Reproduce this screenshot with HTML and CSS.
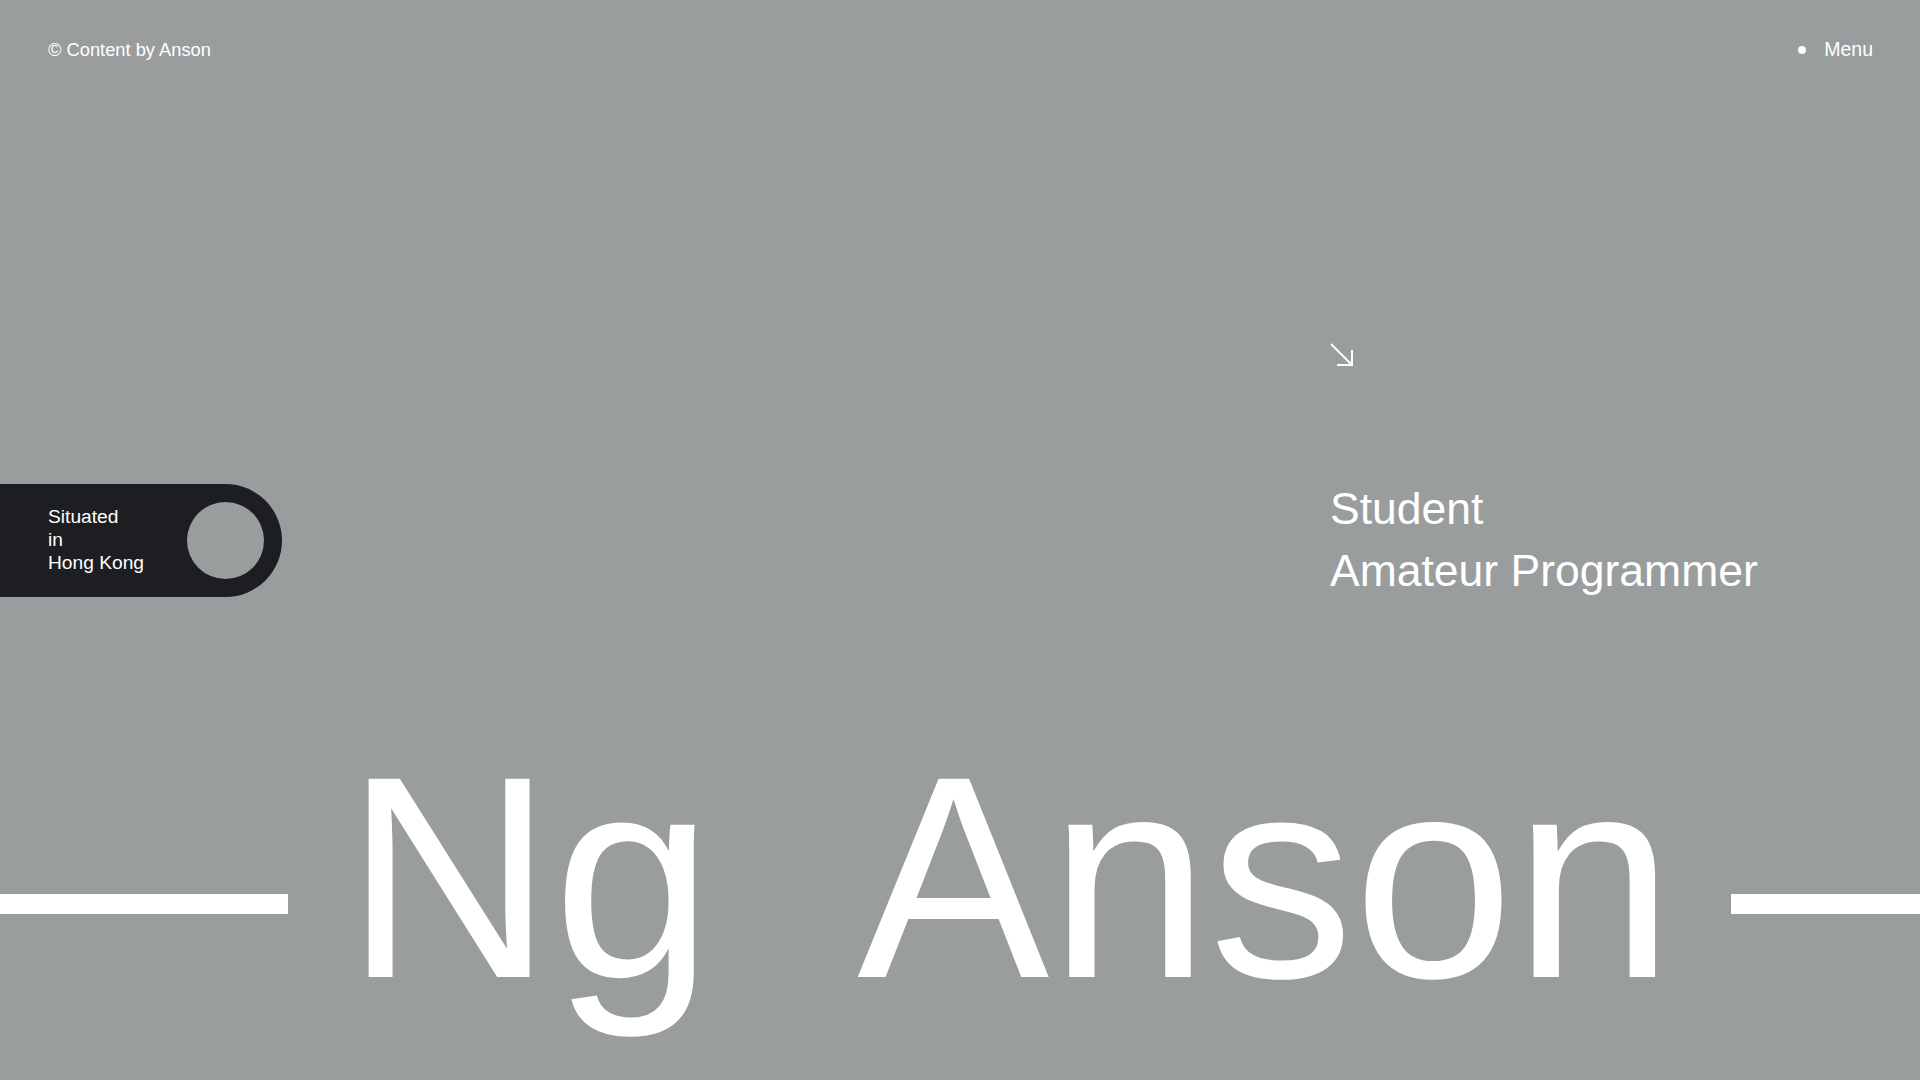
FILE: index.html
```html
<!DOCTYPE html>
<html lang="en">
<head>
<meta charset="utf-8">
<title>Ng Anson</title>
<link rel="stylesheet" href="styles.css">
</head>
<body>
<div class="page">
  <header class="header">
    <div class="credit">© Content by Anson</div>
    <nav class="menu"><span class="menu-dot"></span><span class="menu-label">Menu</span></nav>
  </header>

  <section class="hero">
    <div class="arrow">
      <svg width="24" height="24" viewBox="0 0 24 24" fill="none" stroke="#fff" stroke-width="2">
        <line x1="1" y1="1" x2="22" y2="22"/>
        <polyline points="7,22 22,22 22,7"/>
      </svg>
    </div>
    <div class="location">
      <div class="location-text">Situated<br>in<br>Hong Kong</div>
      <div class="location-hole"></div>
    </div>
    <div class="roles">
      <div>Student</div>
      <div>Amateur Programmer</div>
    </div>
  </section>

  <section class="name">
    <span class="name-line name-line-left"></span>
    <span class="name-word name-first">Ng</span>
    <span class="name-word">Anson</span>
    <span class="name-line name-line-right"></span>
  </section>
</div>
</body>
</html>
```

FILE: styles.css
```css
html, body {
  margin: 0;
  padding: 0;
}

body {
  background: #9a9d9e;
  color: #ffffff;
  font-family: "Liberation Sans", Arial, sans-serif;
  overflow: hidden;
}

.page {
  width: 1920px;
  height: 1080px;
  display: flex;
  flex-direction: column;
}

.header {
  display: flex;
  justify-content: space-between;
  align-items: center;
  padding: 38px 47px 0 48px;
  height: 23px;
}

.credit {
  font-size: 18.3px;
  line-height: 23px;
}

.menu {
  display: flex;
  align-items: center;
  gap: 18px;
}

.menu-dot {
  width: 8px;
  height: 8px;
  border-radius: 50%;
  background: #ffffff;
}

.menu-label {
  font-size: 19.5px;
  line-height: 23px;
}

.hero {
  display: grid;
  grid-template-columns: 1330px 1fr;
  grid-template-rows: 24px 124px;
  row-gap: 111px;
  margin-top: 282px;
  align-items: center;
}

.arrow {
  grid-column: 2;
  grid-row: 1;
  height: 24px;
}

.arrow svg {
  display: block;
}

.location {
  grid-column: 1;
  grid-row: 2;
  width: 282px;
  height: 113px;
  box-sizing: border-box;
  background: #1d1e21;
  border-radius: 0 56.5px 56.5px 0;
  display: flex;
  align-items: center;
  justify-content: space-between;
  padding: 0 18px 0 48px;
}

.location-text {
  font-size: 19.2px;
  line-height: 23px;
  margin-bottom: 2px;
}

.location-hole {
  width: 77px;
  height: 77px;
  border-radius: 50%;
  background: #9a9d9e;
}

.roles {
  grid-column: 2;
  grid-row: 2;
  font-size: 44.5px;
  line-height: 62px;
}

.name {
  display: flex;
  align-items: center;
  gap: 57px;
  margin-top: 131px;
  font-size: 288px;
  line-height: 1;
  white-space: nowrap;
}

.name-first {
  margin-right: 87px;
}

.name-line {
  height: 20px;
  background: #ffffff;
  margin-top: 53px;
}

.name-line-left {
  width: 288px;
  flex: none;
}

.name-line-right {
  flex: 1;
}
```
